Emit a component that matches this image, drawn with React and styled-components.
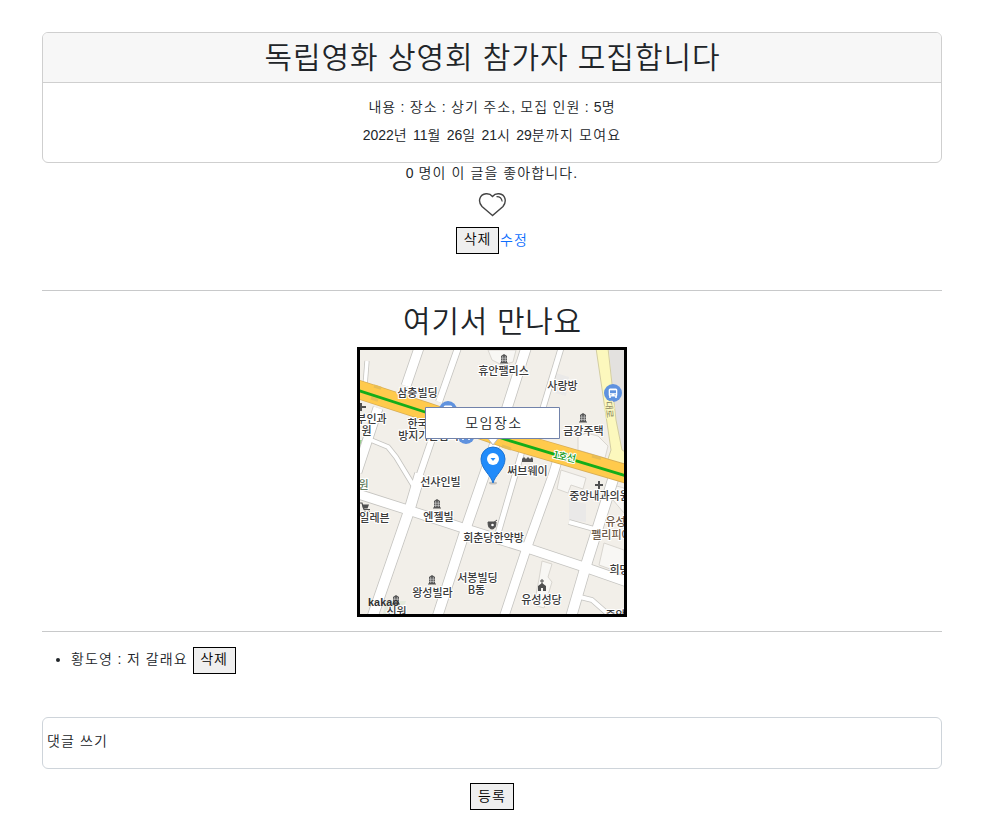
import React from "react";
import styled, { createGlobalStyle } from "styled-components";

const GlobalStyle = createGlobalStyle`
  *, *::before, *::after { box-sizing: border-box; }
  body {
    margin: 0;
    background: #fff;
    color: #212529;
    font-family: "Liberation Sans", "Noto Sans CJK KR", sans-serif;
    font-size: 14px;
    font-weight: 350;
    line-height: 20px;
  }
`;

const Page = styled.main`
  width: 900px;
  height: 820px;
  margin-left: 42px;
  padding-top: 32px;
  display: flex;
  flex-direction: column;
  overflow: hidden;
`;

const Card = styled.section`
  height: 131px;
  flex: none;
  border: 1px solid #cfcfcf;
  border-radius: 6px;
  overflow: hidden;
  text-align: center;
`;

const CardHeader = styled.header`
  height: 50px;
  background: #f7f7f7;
  border-bottom: 1px solid #cfcfcf;
`;

const Heading = styled.h1`
  margin: 0;
  padding: 1px 0 0 1px;
  font-size: 30px;
  font-weight: 350;
  line-height: 48px;
  height: 48px;
  white-space: nowrap;
  letter-spacing: ${(p) => p.$spacing}px;
`;

const CardBody = styled.div`
  display: flex;
  flex-direction: column;
  gap: 8px;
  padding-top: 14px;
`;

const Line = styled.p`
  margin: 0;
  height: 20px;
  white-space: nowrap;
  letter-spacing: ${(p) => p.$spacing || 0}px;
  word-spacing: ${(p) => p.$word || 0}px;
`;

const Num = styled.span`
  letter-spacing: 0;
`;

const Likes = styled.div`
  height: 91px;
  display: flex;
  flex-direction: column;
  align-items: center;
`;

const Heart = styled.svg`
  display: block;
  width: 28px;
  height: 25px;
  margin-top: 9px;
`;

const Actions = styled.div`
  display: flex;
  align-items: center;
  margin-top: 10px;
`;

const Button = styled.button`
  width: ${(p) => p.$width || 43}px;
  height: 27px;
  padding: 0 0 ${(p) => p.$lift || 2}px;
  border: 1px solid #000;
  background: #efefef;
  color: #000;
  font: inherit;
  line-height: 20px;
  letter-spacing: 1px;
`;

const EditLink = styled.a`
  margin-left: 1px;
  color: #0d6efd;
  letter-spacing: 1px;
  padding-bottom: 2px;
`;

const Rule = styled.hr`
  width: 100%;
  height: 1px;
  flex: none;
  margin: ${(p) => p.$top}px 0 0;
  border: 0;
  background: #c8c9ca;
`;

const MeetSection = styled.section`
  display: flex;
  flex-direction: column;
  align-items: center;
  padding-top: 6px;
`;

const MapFrame = styled.div`
  width: 270px;
  height: 270px;
  margin-top: 2px;
  border: 3px solid #000;
`;

const MapSvg = styled.svg`
  display: block;
  width: 264px;
  height: 264px;
`;

const Comments = styled.ul`
  margin: 15px 0 0;
  padding-left: 29px;
  height: 27px;
`;

const Comment = styled.li`
  height: 27px;
  line-height: 25px;
`;

const CommentRow = styled.div`
  display: flex;
  gap: 5px;
`;

const CommentText = styled.span`
  letter-spacing: 1.1px;
  word-spacing: -0.4px;
  line-height: 25px;
`;

const CommentBox = styled.div`
  height: 52px;
  margin-top: 43px;
  padding: 13px 4px;
  border: 1px solid #ced4da;
  border-radius: 6px;
  letter-spacing: 1.1px;
`;

const SubmitRow = styled.div`
  display: flex;
  justify-content: center;
  margin-top: 14px;
`;

const roads = [
  ["M420 345L406 386M378 408L357 472", 9],
  ["M459 345L439 402M433 436L418 480", 6],
  ["M420 474L410 508L370 624", 10],
  ["M355 493L405 509L463 528L530 549L584 567L630 583", 9],
  ["M527 345L507 408L486 470L467 525L435 624", 9.5],
  ["M562 345L543 408", 5],
  ["M560 452L553 475L526 550L501 626", 8.5],
  ["M522 451L497 537", 5],
  ["M616 470L587 562L569 624", 10],
  ["M569 522L594 529", 4],
  ["M580 597L592 600L608 614", 4],
  ["M371 440L388 447L396 457L413 485", 4],
  ["M367 361L365 386", 3.5],
];

const buildings = [
  "M488 350l4 10 10 5 11-3 3-12z",
  "M578 437l8-4 12 3 10 10-3 12-27-8z",
  "M561 470l25 8-3 11-12-4-3 8-11-4z",
  "M542 561l10 3-4 13 4 5-8 26-10-3 5-26z",
  "M604 543l20 7v24l-25-9z",
  "M613 485l11 3v25l-11-13z",
];

const labels = [
  [503, 375, "휴안팰리스"], [562, 390, "사랑방"], [417, 397, "삼충빌딩"],
  [371, 423, "부인과"], [366, 435, "원"], [417, 428, "한국"], [428, 440, "방지기관협회"],
  [583, 435, "금강주택"], [527, 475, "써브웨이"], [440, 486, "선샤인빌"],
  [363, 489, "원", "#668064"], [374, 522, "일레븐"], [438, 521, "엔젤빌"],
  [493, 542, "회춘당한약방"], [599, 500, "중앙내과의원"], [615, 526, "유성", "#6d5a48"],
  [611, 539, "펠리피아", "#6d5a48"], [477, 582, "서봉빌딩"], [476, 594, "B동"],
  [432, 597, "왕성빌라"], [541, 604, "유성성당"], [619, 574, "희망"],
  [396, 616, "신원"], [615, 619, "중앙"],
];

function Building({ x, y }) {
  return (
    <g transform={`translate(${x} ${y})`}>
      <path d="M-3-3L0-5L3-3V4H-3Z" fill="#555" />
      <path d="M-1.3-3V3M1.3-3V3M-3-.8H3M-3 1.4H3" stroke="#ddd" strokeWidth=".6" />
      <path d="M-4 4H4" stroke="#555" />
    </g>
  );
}

function BusStop({ x, y }) {
  return (
    <g transform={`translate(${x} ${y})`}>
      <circle r="9" fill="#5f92df" />
      <rect x="-4.3" y="-4.5" width="8.6" height="8" rx="1.5" fill="#fff" />
      <path d="M-3-2.7H3V.2H-3Z" fill="#5f92df" />
      <path d="M-3 3V5M3 3V5" stroke="#fff" strokeWidth="1.6" />
      <path d="M-2.7 1.8H-1.5M1.5 1.8H2.7" stroke="#5f92df" />
    </g>
  );
}

function MeetingMap() {
  return (
    <MapSvg viewBox="360 350 264 264" fontFamily='"Noto Sans CJK KR", sans-serif'>
      <path fill="#f2efe9" d="M360 350h264v264H360z" />
      <path fill="#e3e1df" d="M609 350h15v108l-6-14z" />
      <path fill="#eae9e8" d="M556 373l13 4-3 19-11-3zM569 500l17 4v18l-17-2z" />
      <path fill="#e3eadc" d="M386 601h20l-4 13h-19z" />
      <path fill="#93cf8d" d="M360 440l2 0-2 7z" />
      {buildings.map((d) => <path key={d} d={d} fill="#f8f7f4" stroke="#d9d6d0" />)}
      {roads.map(([d, w]) => <path key={d} d={d} fill="none" stroke="#c5c4c0" strokeWidth={w + 1.6} strokeLinejoin="round" />)}
      {roads.map(([d, w]) => <path key={d} d={d} fill="none" stroke="#fff" strokeWidth={w} strokeLinejoin="round" />)}
      <path d="M596 348H608L616 420L622 450L630 455V475L607 462L611 450Z" fill="#fcf8bd" stroke="#d3cda2" />
      <path d="M354 388L425 411L507 439L630 475" fill="none" stroke="#d8ad55" strokeWidth="19" />
      <path d="M354 388L425 411L507 439L630 475" fill="none" stroke="#ffca4c" strokeWidth="17.5" />
      <path d="M374 386l7 2.3M371 398l7 2.3M500 433l10 3.4M502 446l9 3M592 456l9 2.6" stroke="#e7bd55" strokeWidth="3" />
      <path d="M354 389L425 412L507 440L630 477" fill="none" stroke="#14ad19" strokeWidth="2.8" />
      <BusStop x={613} y={393} />
      <BusStop x={448} y={410} />
      <BusStop x={466} y={435} />
      {[[504, 359], [583, 418], [437, 504], [432, 580], [396, 600]].map(([x, y]) => <Building key={x} x={x} y={y} />)}
      <path d="M599 481v8M595 485h8M361 403v8M359 407h7" stroke="#505050" strokeWidth="2" />
      <path d="M360 503h2l2 6.5h6" stroke="#505050" strokeWidth="1.2" fill="none" />
      <path d="M362 504.5h7l-1.5 4h-4.5z" fill="#505050" />
      <path d="M364 511.5h1.6M368 511.5h1.6" stroke="#505050" strokeWidth="1.6" />
      <path d="M488 522h8q0 7-4 7t-4-7m5 1l4-3" stroke="#505050" fill="#505050" />
      <circle cx="492.5" cy="525" r="1.3" fill="#fff" />
      <path d="M522 462V459l2-2 2 2 2-2 2 2 2-2 1 2v3z" fill="#555" />
      <path d="M538 591v-5l4-3 4 3v5h-3v-3h-2v3z" fill="#505050" />
      <path d="M542 579v5M540 581h4" stroke="#505050" />
      <g fontSize="11" fontWeight="500" textAnchor="middle" stroke="#fff" strokeWidth="2.2" paintOrder="stroke" strokeLinejoin="round">
        {labels.map(([x, y, text, color = "#3a3a3a"]) => <text key={`${x}-${y}`} x={x + 0.5} y={y} fill={color}>{text}</text>)}
        <text transform="translate(563.5 460) rotate(13)" fill="#159b22" fontSize="10" letterSpacing="-.5">1호선</text>
        <text transform="translate(606 410) rotate(84)" fill="#85815f" stroke="#fcf8bd" fontSize="9" fontWeight="400">대로</text>
      </g>
      <text x="368" y="606" fontFamily="Liberation Sans" fontSize="10.8" fontWeight="700" fill="#333" textLength="31">kakao</text>
      <ellipse cx="493" cy="483" rx="4" ry="1.5" fill="#8a8a8a" opacity=".45" />
      <path d="M493 483C491 475 481 469 481 459A12 12 0 0 1 505 459C505 469 495 475 493 483Z" fill="#218bfa" stroke="#1b72d2" />
      <circle cx="493" cy="459" r="6" fill="#fff" />
      <path d="M490.5 458h5l-2.5 3z" fill="#218bfa" />
      <path d="M425.5 407.5H559.5V438.5H498L493 445L488 438.5H425.5Z" fill="#fff" />
      <path d="M488 438.5L493 445L498 438.5" fill="none" stroke="#b9bcc4" />
      <path d="M425.5 407.5H559.5V438.5H425.5Z" fill="none" stroke="#7182aa" />
      <text x="494" y="427.5" textAnchor="middle" fontSize="14" fontWeight="350" fill="#212529" letterSpacing="1.5">모임장소</text>
    </MapSvg>
  );
}

export default function App() {
  return (
    <>
      <GlobalStyle />
      <Page>
        <Card>
          <CardHeader><Heading $spacing={0.95}>독립영화 상영회 참가자 모집합니다</Heading></CardHeader>
          <CardBody>
            <Line $spacing={1.1} $word={-0.8}>내용 : 장소 : 상기 주소, 모집 인원 : <Num>5</Num>명</Line>
            <Line $spacing={1.2}>
              <Num>2022</Num>년 <Num>11</Num>월 <Num>26</Num>일 <Num>21</Num>시 <Num>29</Num>분까지 모여요
            </Line>
          </CardBody>
        </Card>
        <Likes>
          <Line $spacing={1.1}><Num>0</Num> 명이 이 글을 좋아합니다.</Line>
          <Heart viewBox="0 0 28 25" fill="none" stroke="#444" strokeWidth="1.4">
            <path d="M14.5 23.5L4 14.5C-.5 9.5 1.5 2.5 8 1.8C11 1.5 13.3 3 14.5 4.5C15.7 3 18 1.5 21 1.8C27.5 2.5 29 9.5 25 14.5Z" />
            <path d="M18.5 4.7Q23.3 4.5 24.2 9.5" strokeWidth="1.2" />
          </Heart>
          <Actions><Button $lift={3}>삭제</Button><EditLink>수정</EditLink></Actions>
        </Likes>
        <Rule $top={36} />
        <MeetSection>
          <Heading as="h2" $spacing={0.7}>여기서 만나요</Heading>
          <MapFrame><MeetingMap /></MapFrame>
        </MeetSection>
        <Rule $top={14} />
        <Comments>
          <Comment><CommentRow><CommentText>황도영 : 저 갈래요</CommentText><Button $lift={4}>삭제</Button></CommentRow></Comment>
        </Comments>
        <CommentBox>댓글 쓰기</CommentBox>
        <SubmitRow><Button $width={44}>등록</Button></SubmitRow>
      </Page>
    </>
  );
}
